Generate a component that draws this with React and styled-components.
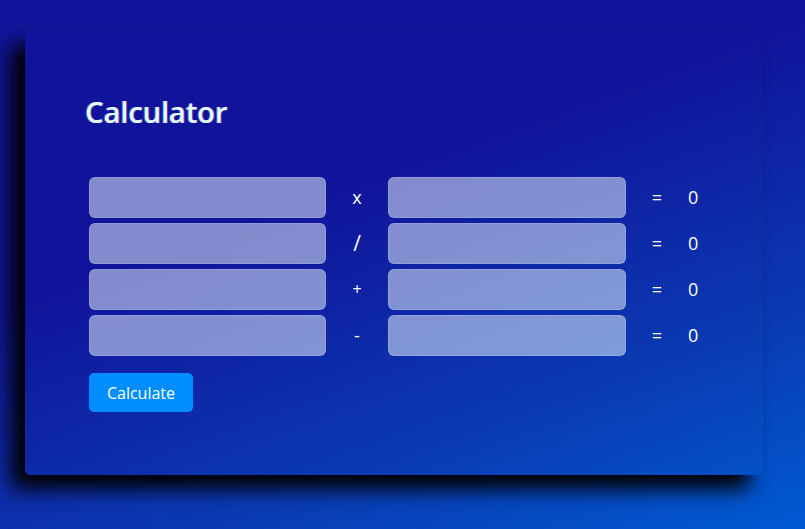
import React from 'react';
import styled, { createGlobalStyle } from 'styled-components';

// calculadora simples: quatro linhas de operação e um botão

const GlobalStyle = createGlobalStyle`
  * { box-sizing: border-box; }

  html, body {
    margin: 0;
    height: 100%;
  }

  body {
    font-family: "Open Sans", "Liberation Sans", sans-serif;
    background: linear-gradient(160deg, #11149a 38%, #0a3cb4 75%, #005ad2 100%);
    overflow: hidden;
  }
`;

const Page = styled.div`
  width: 805px;
  height: 529px;
  padding: 30px 42px 0 25px;
`;

const Card = styled.div`
  width: 738px;
  height: 445px;
  border-radius: 5px;
  padding: 62px 60px 0 60px;
  box-shadow: -14px 14px 20px #000;
`;

const Title = styled.h1`
  margin: 0 0 45px;
  font-size: 29.5px;
  line-height: 40px;
  font-weight: 600;
  color: #e6fbff;
  letter-spacing: -0.3px;
  text-shadow: 1px 0 0 rgba(255, 120, 200, 0.35), -1px 0 0 rgba(120, 220, 255, 0.35);
`;

const Rows = styled.div`
  display: grid;
  grid-template-columns: 237px 62px 238px 62px 40px;
  row-gap: 5px;
  padding-left: 4px;
  align-items: center;
`;

const Field = styled.input`
  width: 100%;
  height: 41px;
  border-radius: 6px;
  border: 1px solid rgba(255, 255, 255, 0.14);
  background: rgba(245, 255, 255, 0.5);
  outline: none;
  padding: 0 10px;
  font-family: inherit;
  font-size: 16px;
  color: #fff;
`;

const Op = styled.span`
  text-align: center;
  color: #fff;
  font-size: ${p => p.$size || 18}px;
  line-height: 41px;
  font-weight: 500;
`;

const Result = styled.span`
  color: #fff;
  font-size: 18px;
  line-height: 41px;
  font-weight: 500;
  text-align: ${p => (p.$num ? 'left' : 'center')};
`;

const Button = styled.button`
  margin: 17px 0 0 4px;
  width: 104px;
  height: 39px;
  border: none;
  border-radius: 5px;
  background: #008eff;
  color: #fff;
  font-family: inherit;
  font-size: 16px;
  font-weight: 500;
  cursor: pointer;
`;

const ops = [
  { sign: 'x', size: 18 },
  { sign: '/', size: 21 },
  { sign: '+', size: 16 },
  { sign: '-', size: 18 },
];

const App = () => {
  return (
    <>
      <GlobalStyle />
      <Page>
        <Card>
          <Title>Calculator</Title>

          <Rows>
            {ops.map(op => (
              <React.Fragment key={op.sign}>
                <Field type="text" />
                <Op $size={op.size}>{op.sign}</Op>
                <Field type="text" />
                <Result>=</Result>
                <Result $num>0</Result>
              </React.Fragment>
            ))}
          </Rows>

          <Button>Calculate</Button>
        </Card>
      </Page>
    </>
  );
};

export default App;
